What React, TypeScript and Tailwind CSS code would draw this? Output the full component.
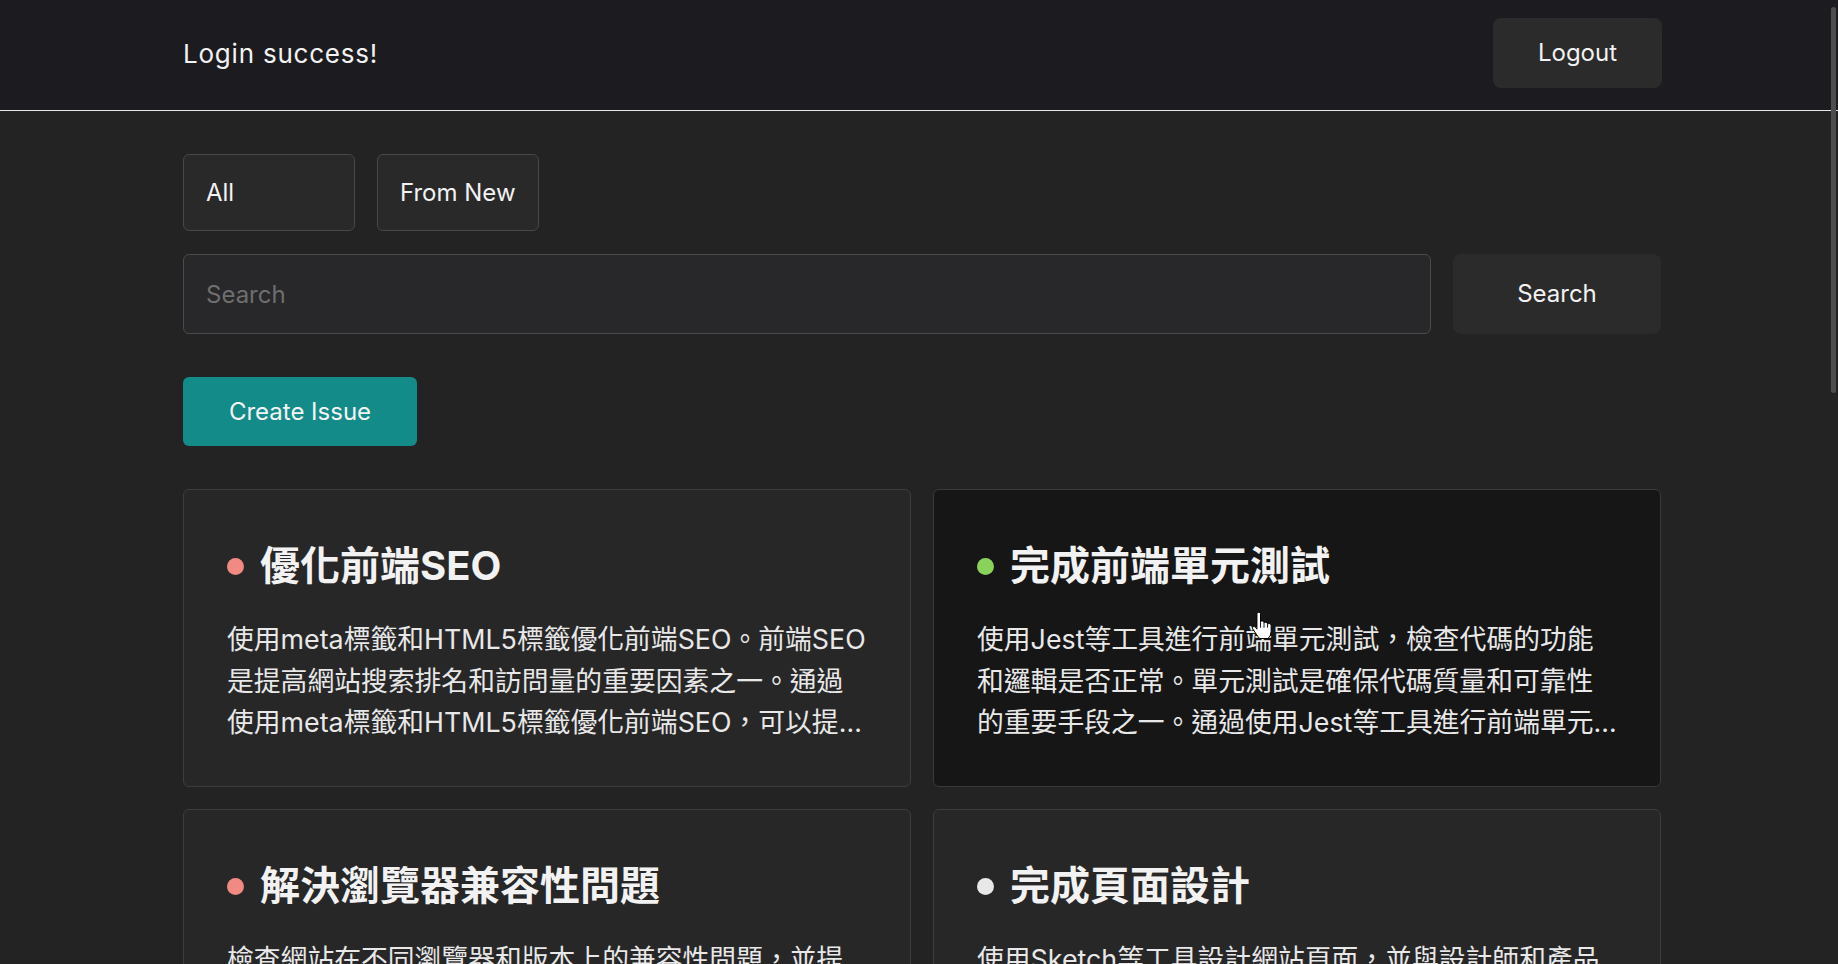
import React from "react";

type Issue = { title: string; body: string; dot: string; dark?: boolean };

const issues: Issue[] = [
  {
    title: "優化前端SEO",
    body: "使用meta標籤和HTML5標籤優化前端SEO。前端SEO是提高網站搜索排名和訪問量的重要因素之一。通過使用meta標籤和HTML5標籤優化前端SEO，可以提高網站的曝光度和點擊率。",
    dot: "bg-[#f28a84]",
  },
  {
    title: "完成前端單元測試",
    body: "使用Jest等工具進行前端單元測試，檢查代碼的功能和邏輯是否正常。單元測試是確保代碼質量和可靠性的重要手段之一。通過使用Jest等工具進行前端單元測試，可以及早發現問題。",
    dot: "bg-[#8ad35a]",
    dark: true,
  },
  {
    title: "解決瀏覽器兼容性問題",
    body: "檢查網站在不同瀏覽器和版本上的兼容性問題，並提供解決方案。瀏覽器兼容性是確保使用者體驗一致的重要因素之一，需要持續測試與修正。",
    dot: "bg-[#f28a84]",
  },
  {
    title: "完成頁面設計",
    body: "使用Sketch等工具設計網站頁面，並與設計師和產品經理溝通，確保頁面設計符合需求與使用者體驗，並提供完整的設計稿與規範。",
    dot: "bg-[#e8e8e8]",
  },
  {
    title: "優化網站效能",
    body: "使用Lighthouse等工具分析網站效能，並針對圖片、腳本與樣式進行壓縮與延遲載入，提升頁面載入速度與使用者體驗。",
    dot: "bg-[#8ad35a]",
  },
  {
    title: "撰寫技術文件",
    body: "整理專案架構與開發流程，撰寫技術文件，方便團隊成員快速了解專案並進行後續維護與開發。",
    dot: "bg-[#e8e8e8]",
  },
];

function Card({ issue }: { issue: Issue }) {
  return (
    <div
      className={
        "h-[298px] rounded-[6px] border px-[43px] pt-[44px] " +
        (issue.dark ? "border-[#3a3a3a] bg-[#161616]" : "border-[#3d3d3d] bg-[#272727]")
      }
    >
      <div className="flex h-[64px] items-center gap-[16px]">
        <span className={"h-[17px] w-[17px] shrink-0 rounded-full " + issue.dot} />
        <h2 className="text-[40px] font-bold leading-[64px] text-[#f2f2f2]">{issue.title}</h2>
      </div>
      <p className="mt-[21px] line-clamp-3 text-[26.8px] leading-[41.5px] text-[#e8e8e8]">{issue.body}</p>
    </div>
  );
}

function HandCursor() {
  return (
    <svg
      className="pointer-events-none absolute left-[1249px] top-[611px]"
      width="23"
      height="29"
      viewBox="0 0 26 31"
    >
      <path
        d="M9 2.2Q9 .5 11 .5Q13 .5 13 2.2L13 11.2Q13.4 10.3 15 10.3Q17 10.3 17 12.3L17 12.8Q17.4 11.8 19 11.8Q21 11.8 21 13.8L21 14.3Q21.4 13.3 23 13.3Q25 13.3 25 15.3L25 22Q25 27 21.5 30.2L12 30.2Q10.2 28.2 8.3 25.4L4.2 19.3Q3.2 17.6 4.6 16.8Q6 16.1 7.6 17.8L9 19.6Z"
        fill="#ffffff"
        stroke="#000000"
        strokeWidth="1.1"
        strokeLinejoin="round"
      />
      <path d="M13 11.2L13 18M17 12.8L17 18M21 14.3L21 18" stroke="#000000" strokeWidth="1" fill="none" />
    </svg>
  );
}

export default function App() {
  return (
    <div className="relative h-screen overflow-hidden bg-[#232324] font-['Inter','Noto_Sans_CJK_TC',sans-serif] text-[#f2f2f2]">
      <header className="h-[111px] border-b border-[#e6e6e6] bg-[#1c1c20]">
        <div className="flex h-[110px] items-center justify-between pb-[4px] pl-[183px] pr-[176px]">
          <div className="text-[26px] tracking-[0.03em]">Login success!</div>
          <button className="h-[70px] w-[169px] rounded-[8px] bg-[#2b2b2c] text-[24px] text-[#f2f2f2]">
            Logout
          </button>
        </div>
      </header>

      <main className="pl-[183px] pr-[177px] pt-[43px]">
        <div className="w-[1478px]">
          <div className="flex gap-[22px]">
            <button className="h-[77px] w-[172px] rounded-[6px] border border-[#484848] bg-[#29292a] px-[22px] text-left text-[24px]">
              All
            </button>
            <button className="h-[77px] rounded-[6px] border border-[#484848] bg-[#29292a] px-[22px] text-left text-[24px]">
              From New
            </button>
          </div>

          <div className="mt-[23px] flex gap-[22px]">
            <input
              placeholder="Search"
              className="h-[80px] flex-1 rounded-[6px] border border-[#4a4a4a] bg-[#28282a] px-[22px] text-[24px] text-[#f2f2f2] outline-none placeholder:text-[#6e6e6e]"
            />
            <button className="h-[80px] w-[208px] rounded-[8px] bg-[#2b2b2c] text-[24px]">Search</button>
          </div>

          <button className="mt-[43px] h-[69px] w-[234px] rounded-[6px] bg-[#138b88] text-[24px] text-[#f4f4f4]">
            Create Issue
          </button>

          <div className="mt-[43px] grid grid-cols-2 gap-[22px]">
            {issues.map((i) => (
              <Card key={i.title} issue={i} />
            ))}
          </div>
        </div>
      </main>

      <HandCursor />
      <div className="absolute right-[2px] top-[7px] h-[386px] w-[5px] rounded-full bg-[#4e4e4e]" />
    </div>
  );
}
